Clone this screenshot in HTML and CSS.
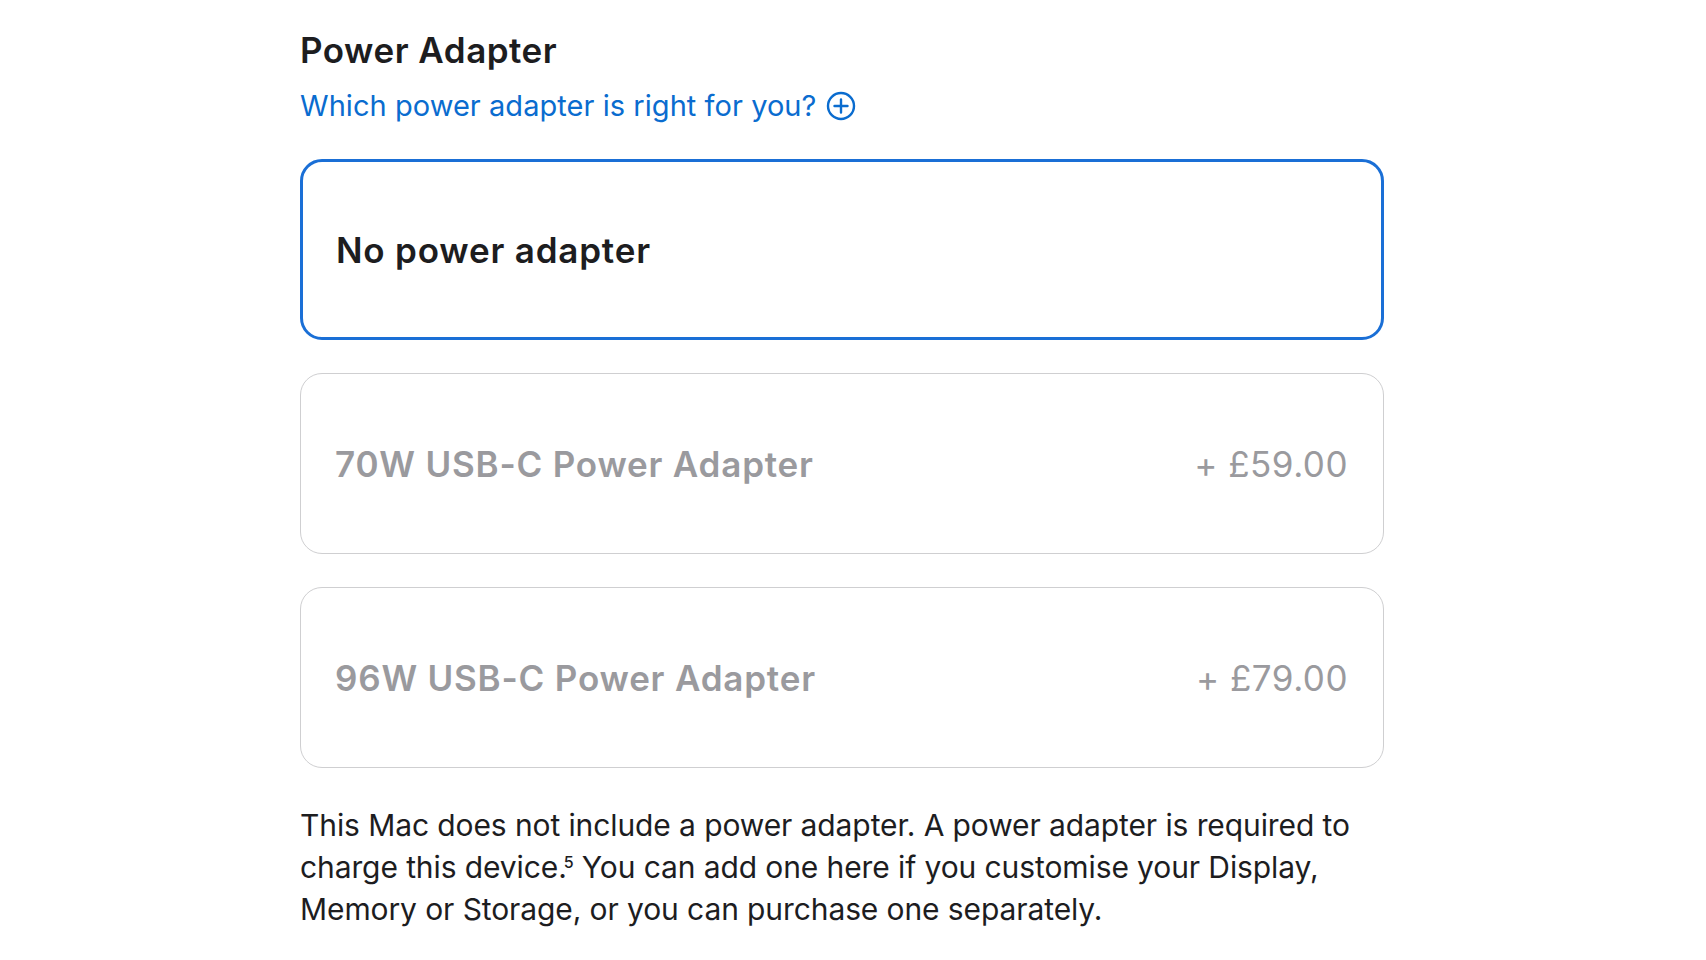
FILE: index.html
```html
<!DOCTYPE html>
<html lang="en">
<head>
<meta charset="utf-8">
<title>Power Adapter</title>
<link rel="stylesheet" href="styles.css">
</head>
<body>
<main class="section">
  <h2 class="title">Power Adapter</h2>
  <a class="help-link" href="#">Which power adapter is right for you?
    <svg class="plus-icon" viewBox="0 0 30 30" width="30" height="30" aria-hidden="true">
      <circle cx="15" cy="15" r="13" fill="none" stroke="currentColor" stroke-width="2.4"/>
      <path d="M15 8.5v13M8.5 15h13" fill="none" stroke="currentColor" stroke-width="2.4" stroke-linecap="round"/>
    </svg>
  </a>
  <div class="options">
    <div class="option selected"><span class="name">No power adapter</span></div>
    <div class="option"><span class="name">70W USB-C Power Adapter</span><span class="price">+ £59.00</span></div>
    <div class="option"><span class="name">96W USB-C Power Adapter</span><span class="price">+ £79.00</span></div>
  </div>
  <p class="note">This Mac does not include a power adapter. A power adapter is required to charge this device.<sup class="footnote">5</sup> You can add one here if you customise your Display, Memory or Storage, or you can purchase one separately.</p>
</main>
</body>
</html>
```

FILE: styles.css
```css
html, body {
  margin: 0;
  padding: 0;
  background: #ffffff;
}
body {
  font-family: Inter, "Noto Sans", "Liberation Sans", sans-serif;
  color: #1d1d1f;
}
.section {
  width: 1084px;
  margin-left: 300px;
  padding-top: 28px;
}
.title {
  margin: 0;
  font-size: 35px;
  font-weight: 600;
  line-height: 44px;
  letter-spacing: 0.5px;
}
.help-link {
  display: inline-flex;
  align-items: center;
  gap: 10px;
  margin-top: 14px;
  font-size: 29px;
  line-height: 40px;
  color: #0a6ccf;
  text-decoration: none;
  letter-spacing: 0.05px;
}
.plus-icon {
  display: block;
}
.options {
  display: flex;
  flex-direction: column;
  gap: 33px;
  margin-top: 33px;
}
.option {
  box-sizing: border-box;
  height: 181px;
  border: 1.5px solid #cfcfd1;
  border-radius: 22px;
  display: flex;
  align-items: center;
  justify-content: space-between;
  padding: 0 35px 0 34px;
  color: #9a9a9e;
  font-size: 35px;
}
.option.selected {
  border: 3px solid #1a6fd6;
  color: #1d1d1f;
  padding-left: 33px;
}
.name {
  font-weight: 600;
  letter-spacing: 0.8px;
}
.price {
  font-weight: 400;
  letter-spacing: 0.5px;
}
.note {
  margin: 36px 0 0;
  font-size: 30px;
  line-height: 42px;
  letter-spacing: -0.1px;
}
.footnote {
  font-size: 16px;
  font-weight: 500;
  line-height: 0;
  vertical-align: 10px;
  margin-left: -3px;
}
```
